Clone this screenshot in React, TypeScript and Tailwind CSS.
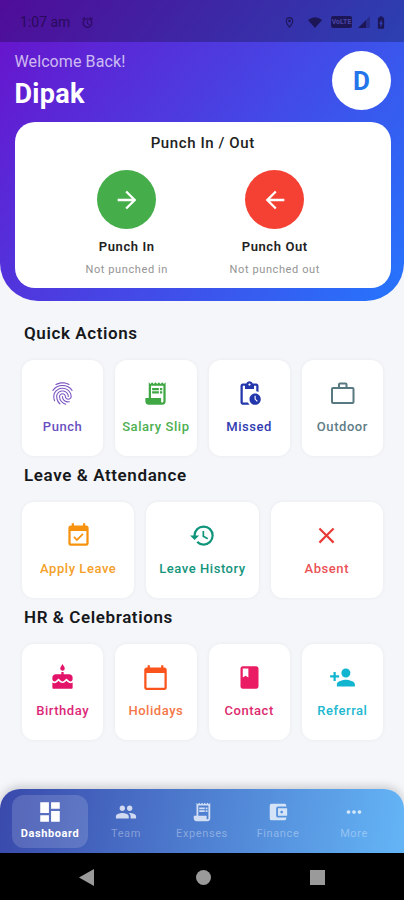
import type { ComponentType } from 'react'
import {
  MdAccessAlarm,
  MdAccountBalanceWallet,
  MdArrowBack,
  MdArrowForward,
  MdBatteryChargingFull,
  MdBook,
  MdCake,
  MdCalendarToday,
  MdClose,
  MdDashboard,
  MdEventAvailable,
  MdFingerprint,
  MdHistory,
  MdMoreHoriz,
  MdOutlineLocationOn,
  MdPendingActions,
  MdPeople,
  MdPersonAdd,
  MdReceiptLong,
} from 'react-icons/md'

type Icon = ComponentType<{ className?: string }>

interface Action {
  label: string
  icon:  Icon
  color: string
  text:  string
}

// Briefcase with a narrow handle, lighter than the Material one
function Briefcase({ className }: { className?: string }) {
  return (
    <svg className={className} viewBox="0 0 27 27" fill="none" stroke="currentColor" strokeWidth="2">
      <rect x="3" y="8" width="21.500" height="15" rx="1" />
      <path d="M10 8V4.500a1 1 0 0 1 1-1h5.500a1 1 0 0 1 1 1V8" />
    </svg>
  )
}

const QUICK: Action[] = [
  { label: 'Punch',       icon: MdFingerprint,    color: 'text-[#7e57c2]', text: 'text-[#6a4fc0]' },
  { label: 'Salary Slip', icon: MdReceiptLong,    color: 'text-[#3fa845]', text: 'text-[#4caf50]' },
  { label: 'Missed',      icon: MdPendingActions, color: 'text-[#2336ac]', text: 'text-[#303bb0]' },
  { label: 'Outdoor',     icon: Briefcase,        color: 'text-[#587980]', text: 'text-[#607d86]' },
]

const LEAVE: Action[] = [
  { label: 'Apply Leave',   icon: MdEventAvailable, color: 'text-[#f7920f]', text: 'text-[#f5a029]' },
  { label: 'Leave History', icon: MdHistory,        color: 'text-[#10947a]', text: 'text-[#14957c]' },
  { label: 'Absent',        icon: MdClose,          color: 'text-[#e93c38]', text: 'text-[#eb5257]' },
]

const HR: Action[] = [
  { label: 'Birthday', icon: MdCake,          color: 'text-[#e21368]', text: 'text-[#dc2878]' },
  { label: 'Holidays', icon: MdCalendarToday, color: 'text-[#fa541c]', text: 'text-[#f57648]' },
  { label: 'Contact',  icon: MdBook,          color: 'text-[#ea1c63]', text: 'text-[#dd2a6d]' },
  { label: 'Referral', icon: MdPersonAdd,     color: 'text-[#12b5cf]', text: 'text-[#22b8d0]' },
]

const TABS: { label: string; icon: Icon }[] = [
  { label: 'Dashboard', icon: MdDashboard },
  { label: 'Team',      icon: MdPeople },
  { label: 'Expenses',  icon: MdReceiptLong },
  { label: 'Finance',   icon: MdAccountBalanceWallet },
  { label: 'More',      icon: MdMoreHoriz },
]

function StatusBar() {
  return (
    <div className="h-[42px] bg-black/25 pl-[20px] pr-[15px] pt-[2px] flex items-center text-[#1d1656]">
      <span className="text-[14px] text-[#2a0a5c]">1:07 am</span>
      <MdAccessAlarm className="w-[13px] h-[13px] ml-[11px] text-[#2a0a5c]" />
      <div className="ml-auto flex items-center">
        <MdOutlineLocationOn className="w-[13px] h-[13px] mr-[12px]" />
        <svg className="w-[14px] h-[11px] mr-[9px]" viewBox="0 0 14 11" fill="currentColor">
          <path d="M0 3Q7-2.500 14 3L7 11z" />
        </svg>
        <span className="w-[21px] h-[12px] mr-[6px] rounded-[2px] bg-[#1d1656] text-[#4a44a8] text-[7px] leading-[12px] text-center font-bold">VoLTE</span>
        <svg className="w-[12px] h-[12px] mr-[3px]" viewBox="0 0 12 12" fill="currentColor">
          <path d="M0 12 8 4v8z" />
          <path d="M8 4 12 0v12H8z" opacity=".4" />
        </svg>
        <MdBatteryChargingFull className="w-[16px] h-[15px]" />
      </div>
    </div>
  )
}

interface PunchProps {
  title: string
  note:  string
  icon:  Icon
  color: string
}

function Punch({ title, note, icon: Icon, color }: PunchProps) {
  return (
    <div className="w-[148px] flex flex-col items-center">
      <div className={`w-[59px] h-[59px] rounded-full flex items-center justify-center text-white ${color}`}>
        <Icon className="w-[28px] h-[28px]" />
      </div>
      <span className="mt-[9px] text-[13px] leading-[18px] font-semibold tracking-[0.6px] text-[#222]">{title}</span>
      <span className="mt-[6px] text-[11px] leading-[15px] tracking-[0.6px] text-[#949494]">{note}</span>
    </div>
  )
}

function Section({ title, items, grid }: { title: string; items: Action[]; grid: string }) {
  return (
    <section className="h-[142px]">
      <h2 className="pl-[2px] text-[17px] leading-[22px] font-semibold tracking-[0.6px] text-[#17181c]">{title}</h2>
      <div className={`mt-[16px] grid ${grid}`}>
        {items.map(({ label, icon: Icon, color, text }) => (
          <div
            key={label}
            className="h-[96px] rounded-[12px] bg-white shadow-[0_0_4px_rgba(0,0,0,0.05)] flex flex-col items-center pt-[20px]"
          >
            <Icon className={`w-[27px] h-[27px] ${color}`} />
            <span className={`mt-[12px] text-[13px] leading-[16px] font-medium tracking-[0.55px] whitespace-nowrap ${text}`}>{label}</span>
          </div>
        ))}
      </div>
    </section>
  )
}

function BottomNav() {
  return (
    <nav className="h-[64px] px-[12px] pt-[6px] flex rounded-t-[20px] bg-[linear-gradient(99deg,#3949ab,#64b5f6)] shadow-[0_-3px_8px_rgba(0,0,0,0.17)]">
      {TABS.map(({ label, icon: Icon }, i) => {
        const active = i === 0
        return (
          <div
            key={label}
            className={`w-[76.500px] h-[53px] flex flex-col items-center rounded-[12px] ${active ? 'bg-white/15 pt-[4px]' : 'pt-[6px]'}`}
          >
            {active
              ? <Icon className="w-[26px] h-[26px] text-white" />
              : <Icon className="w-[22px] h-[22px] text-white/75" />}
            <span
              className={`text-[11px] leading-[14px] ${active ? 'mt-[2px] font-bold text-white tracking-[0.6px]' : 'mt-[4px] tracking-[0.6px] text-white/35'}`}
            >
              {label}
            </span>
          </div>
        )
      })}
    </nav>
  )
}

export default function App() {
  return (
    <div className="w-[404px] h-[900px] overflow-hidden flex flex-col bg-[#f4f6fa] font-['Roboto',sans-serif]">
      <header className="h-[301px] shrink-0 overflow-hidden rounded-b-[38px] bg-[linear-gradient(126.6deg,#6a11cb,#2575fc)]">
        <StatusBar />
        <div className="pl-[14.5px] pr-[13px]">
          <div className="h-[79.5px] flex justify-between">
            <div className="pt-[9.5px]">
              <p className="text-[16px] leading-[20px] tracking-[0.1px] text-white/70">Welcome Back!</p>
              <h1 className="mt-[7px] text-[27px] leading-[30px] font-bold tracking-[0.3px] text-white">Dipak</h1>
            </div>
            <div className="w-[59px] h-[59px] mt-[9px] rounded-full bg-white flex items-center justify-center pt-[2px] text-[26px] font-bold text-[#2575ea]">
              D
            </div>
          </div>

          <div className="h-[166px] rounded-[20px] bg-white pt-[11.5px]">
            <h2 className="text-center text-[15px] leading-[20px] font-medium tracking-[0.6px] text-[#222]">Punch In / Out</h2>
            <div className="mt-[17px] flex justify-center -translate-x-[2px]">
              <Punch title="Punch In" note="Not punched in" icon={MdArrowForward} color="bg-[#46ad4b]" />
              <Punch title="Punch Out" note="Not punched out" icon={MdArrowBack} color="bg-[#f44134]" />
            </div>
          </div>
        </div>
      </header>

      <main className="flex-1 pl-[22px] pr-[21px] pt-[21px]">
        <Section title="Quick Actions" items={QUICK} grid="grid-cols-4 gap-[12px]" />
        <Section title="Leave & Attendance" items={LEAVE} grid="grid-cols-3 gap-[12px]" />
        <Section title="HR & Celebrations" items={HR} grid="grid-cols-4 gap-[12px]" />
      </main>

      <BottomNav />

      {/* Android system navigation */}
      <div className="h-[47px] shrink-0 bg-black flex items-center pt-[1px]">
        <div className="pl-[79px] flex items-center">
          <svg className="w-[15px] h-[17px]" viewBox="0 0 15 17" fill="#9a9a9a">
            <path d="M15 0v17L0 8.500z" />
          </svg>
          <span className="ml-[101.5px] w-[15px] h-[15px] rounded-full bg-[#9a9a9a]" />
          <span className="ml-[99px] w-[15px] h-[15px] bg-[#9a9a9a]" />
        </div>
      </div>
    </div>
  )
}
